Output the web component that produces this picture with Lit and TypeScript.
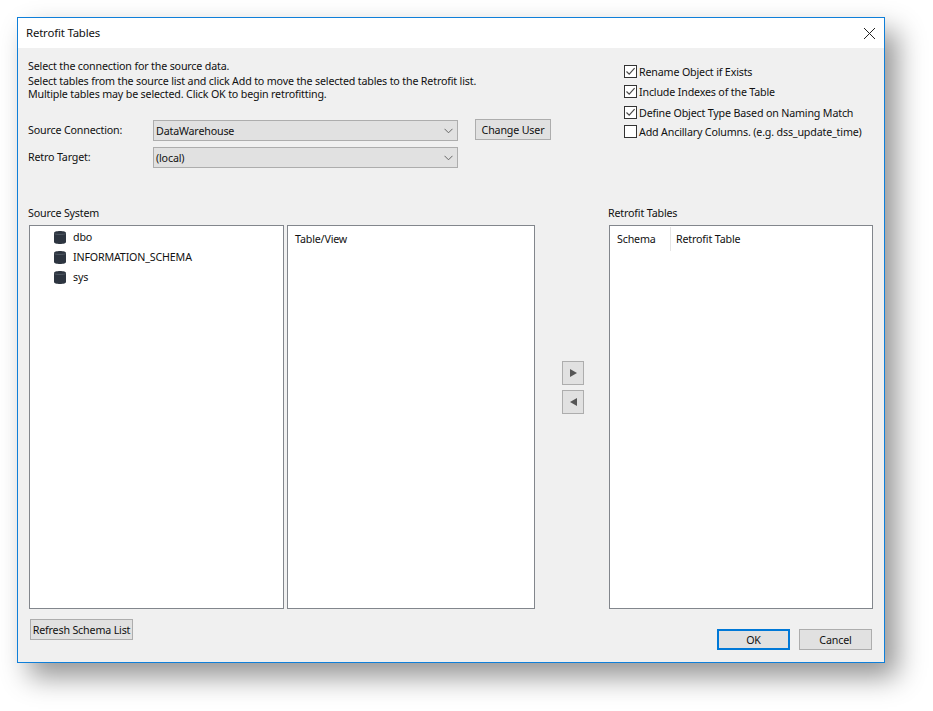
import { LitElement, css, html } from 'lit'
import { customElement } from 'lit/decorators.js'

const schemas = ['dbo', 'INFORMATION_SCHEMA', 'sys']

const options = [
  { label: 'Rename Object if Exists', checked: true, gap: 7 },
  { label: 'Include Indexes of the Table', checked: true, gap: 8 },
  { label: 'Define Object Type Based on Naming Match', checked: true, gap: 6 },
  { label: 'Add Ancillary Columns. (e.g. dss_update_time)', checked: false, gap: 0 },
]

@customElement('app-root')
export class AppRoot extends LitElement {
  static styles = css`
    :host {
      display: block;
      height: 711px;
      padding: 17px 0 0 17px;
      box-sizing: border-box;
      background: #fff;
      overflow: hidden;
      font-family: 'Noto Sans', sans-serif;
      font-size: 10.7px;
      letter-spacing: -0.17px;
      color: #111;
      white-space: nowrap;
    }
    .window {
      width: 868px;
      height: 646px;
      box-sizing: border-box;
      border: 1px solid #0f7fd9;
      background: #f0f0f0;
      box-shadow: 12px 14px 26px rgba(0, 0, 0, 0.42);
      display: flex;
      flex-direction: column;
    }
    .titlebar {
      height: 30px;
      flex: none;
      background: #fff;
      display: flex;
      align-items: center;
      justify-content: space-between;
      padding: 0 8px 2px 8px;
      box-sizing: border-box;
      font-size: 11.4px;
    }
    .close { display: block; width: 13px; height: 13px; margin-top: 2px; }
    .body {
      flex: 1;
      padding: 0 11px;
      display: flex;
      flex-direction: column;
    }
    .top {
      height: 159px;
      flex: none;
      display: flex;
    }
    .left { width: 595px; flex: none; padding-top: 12px; box-sizing: border-box; }
    .intro { margin-left: -1px; line-height: 13px; }
    .intro p { margin: 0; }
    .intro p:first-child { margin-bottom: 2px; }
    .form {
      margin: 19px 0 0 -1px;
      display: grid;
      grid-template-columns: 125px 305px auto;
      grid-auto-rows: 21px;
      row-gap: 6px;
      align-items: center;
    }
    .form > span { padding-bottom: 2px; }
    .select {
      height: 21px;
      box-sizing: border-box;
      border: 1px solid #adadad;
      background: #e1e1e1;
      display: flex;
      align-items: center;
      justify-content: space-between;
      padding: 0 4px 0 2px;
    }
    .chevron { width: 9px; height: 6px; display: block; }
    button {
      font: inherit;
      letter-spacing: inherit;
      color: inherit;
      height: 21px;
      padding: 0;
      box-sizing: border-box;
      border: 1px solid #adadad;
      background: #e1e1e1;
    }
    .change-user { width: 76px; margin: -1px 0 0 17px; align-self: start; }
    .right { padding-top: 17px; }
    .check { display: flex; align-items: center; height: 13px; gap: 2px; }
    .box {
      width: 13px;
      height: 13px;
      box-sizing: border-box;
      border: 1px solid #333;
      background: #fff;
      flex: none;
    }
    .box svg { display: block; width: 11px; height: 11px; }
    .panes {
      display: grid;
      grid-template-columns: 255px 251px 74px 264px;
      grid-template-rows: 12px 384px;
      row-gap: 6px;
      line-height: 13px;
    }
    .caption { margin-left: -1px; }
    .caption.retrofit { grid-column: 4; }
    .list {
      border: 1px solid #82868c;
      background: #fff;
      box-sizing: border-box;
    }
    .tree { padding: 1px 0 0 24px; }
    .tree-row { display: flex; align-items: center; height: 20px; gap: 7px; }
    .tree-row svg { width: 12px; height: 13px; display: block; flex: none; }
    .tables { margin-left: 3px; }
    .header { display: flex; align-items: center; height: 24px; margin-top: 1px; }
    .tables .header { padding-left: 7px; }
    .col-schema {
      width: 61px;
      height: 24px;
      line-height: 24px;
      padding-left: 7px;
      box-sizing: border-box;
      border-right: 1px solid #e5e5e5;
    }
    .col-table { padding-left: 5px; }
    .movers {
      grid-column: 3;
      display: flex;
      flex-direction: column;
      gap: 5px;
      padding: 136px 0 0 27px;
    }
    .movers button {
      width: 22px;
      height: 24px;
      display: flex;
      align-items: center;
      justify-content: center;
    }
    .movers svg { width: 7px; height: 8px; display: block; }
    .footer { flex: 1; display: flex; justify-content: space-between; }
    .refresh { width: 103px; margin: 10px 0 0 1px; }
    .actions { display: flex; gap: 9px; margin: 20px 1px 0 0; }
    .actions button { width: 73px; }
    .ok { border: 2px solid #0078d7; }
  `

  private renderOption(o: { label: string; checked: boolean; gap: number }) {
    return html`
      <div class="check" style="margin-bottom: ${o.gap}px">
        <span class="box">
          ${o.checked
            ? html`<svg viewBox="0 0 11 11" fill="none" stroke="#4a4a4a" stroke-width="1.2"><path d="M1.5 5.5 4.2 8.2 9.6 2.2"></path></svg>`
            : ''}
        </span>
        <span>${o.label}</span>
      </div>
    `
  }

  render() {
    return html`
      <div class="window">
        <div class="titlebar">
          <span>Retrofit Tables</span>
          <svg class="close" viewBox="0 0 13 13" fill="none" stroke="#222" stroke-width="1"><path d="M1 1 12 12M12 1 1 12"></path></svg>
        </div>
        <div class="body">
          <div class="top">
            <div class="left">
              <div class="intro">
                <p>Select the connection for the source data.</p>
                <p>Select tables from the source list and click Add to move the selected tables to the Retrofit list.</p>
                <p>Multiple tables may be selected. Click OK to begin retrofitting.</p>
              </div>
              <div class="form">
                <span>Source Connection:</span>
                <div class="select">DataWarehouse ${this.renderChevron()}</div>
                <button class="change-user">Change User</button>
                <span>Retro Target:</span>
                <div class="select">(local) ${this.renderChevron()}</div>
              </div>
            </div>
            <div class="right">${options.map((o) => this.renderOption(o))}</div>
          </div>
          <div class="panes">
            <div class="caption">Source System</div>
            <div class="caption retrofit">Retrofit Tables</div>
            <div class="list tree">
              ${schemas.map(
                (s) => html`
                  <div class="tree-row">
                    <svg viewBox="0 0 12 13"><path fill="#2d3540" d="M0 2C0 .8 2.7 0 6 0s6 .8 6 2v9c0 1.2-2.7 2-6 2s-6-.8-6-2z"></path><path fill="none" stroke="#6a727c" stroke-width=".6" d="M.3 2.6C1.5 3.7 10.5 3.7 11.7 2.6"></path></svg>
                    <span>${s}</span>
                  </div>
                `
              )}
            </div>
            <div class="list tables"><div class="header"><span>Table/View</span></div></div>
            <div class="movers">
              <button><svg viewBox="0 0 7 8"><path fill="#555" d="M0 0 7 4 0 8z"></path></svg></button>
              <button><svg viewBox="0 0 7 8"><path fill="#555" d="M7 0 0 4 7 8z"></path></svg></button>
            </div>
            <div class="list">
              <div class="header">
                <div class="col-schema">Schema</div>
                <div class="col-table">Retrofit Table</div>
              </div>
            </div>
          </div>
          <div class="footer">
            <button class="refresh">Refresh Schema List</button>
            <div class="actions">
              <button class="ok">OK</button>
              <button>Cancel</button>
            </div>
          </div>
        </div>
      </div>
    `
  }

  private renderChevron() {
    return html`<svg class="chevron" viewBox="0 0 9 6" fill="none" stroke="#666" stroke-width="1"><path d="M.5 .8 4.5 4.8 8.5 .8"></path></svg>`
  }
}
